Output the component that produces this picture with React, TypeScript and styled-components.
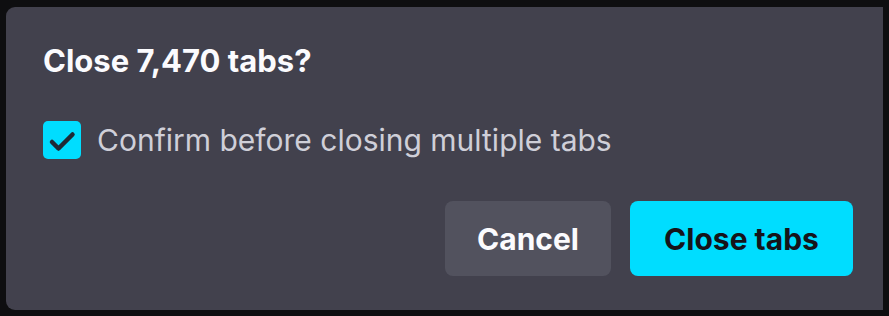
import React from "react";
import styled, { createGlobalStyle } from "styled-components";

const Global = createGlobalStyle`
  html, body { margin: 0; padding: 0; background: #0e0e10; }
  body { width: 889px; height: 316px; overflow: hidden; font-family: Inter, "Liberation Sans", sans-serif; }
`;

const Stage = styled.div`
  width: 889px;
  height: 316px;
  padding: 7px 6px 6px 6px;
  box-sizing: border-box;
  background: #0e0e10;
`;

const Dialog = styled.div`
  width: 877px;
  height: 303px;
  box-sizing: border-box;
  background: #42414d;
  border-radius: 9px 0 0 9px;
  padding: 36px 30px 34px 37px;
  display: flex;
  flex-direction: column;
`;

const Title = styled.h1`
  margin: 0;
  font-size: 31px;
  line-height: 36px;
  font-weight: 700;
  color: #fbfbfe;
`;

const CheckRow = styled.label`
  margin-top: 42px;
  display: flex;
  align-items: center;
  gap: 16px;
`;

const Box = styled.span`
  width: 38px;
  height: 38px;
  border-radius: 5px;
  background: #00ddff;
  display: flex;
  align-items: center;
  justify-content: center;
  flex-shrink: 0;
`;

const CheckText = styled.span`
  font-size: 30px;
  line-height: 36px;
  color: #cfcfd8;
`;

const Buttons = styled.div`
  margin-top: auto;
  display: flex;
  justify-content: flex-end;
  gap: 19px;
`;

const Button = styled.button<{ $primary?: boolean }>`
  height: 75px;
  border: none;
  border-radius: 8px;
  padding: 0;
  width: ${(p) => (p.$primary ? "223px" : "166px")};
  background: ${(p) => (p.$primary ? "#00ddff" : "#52525e")};
  color: ${(p) => (p.$primary ? "#15141a" : "#fbfbfe")};
  font-family: Inter, "Liberation Sans", sans-serif;
  font-size: 30px;
  font-weight: 700;
`;

export default function App() {
  return (
    <>
      <Global />
      <Stage>
        <Dialog>
          <Title>Close 7,470 tabs?</Title>
          <CheckRow>
            <Box>
              <svg width="38" height="38" viewBox="0 0 38 38">
                <path
                  d="M9 21 L15.5 27.5 L29.5 13.5"
                  fill="none"
                  stroke="#1f2a36"
                  strokeWidth="4.5"
                  strokeLinecap="round"
                  strokeLinejoin="round"
                />
              </svg>
            </Box>
            <CheckText>Confirm before closing multiple tabs</CheckText>
          </CheckRow>
          <Buttons>
            <Button>Cancel</Button>
            <Button $primary>Close tabs</Button>
          </Buttons>
        </Dialog>
      </Stage>
    </>
  );
}
